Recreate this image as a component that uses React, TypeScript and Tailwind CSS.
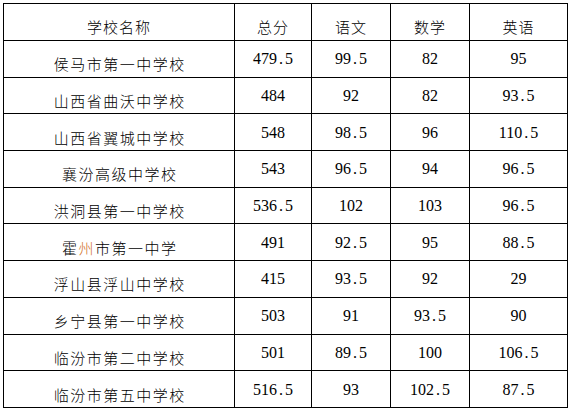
const HEADERS = ['学校名称', '总分', '语文', '数学', '英语'];

const ROWS: [string, string, string, string, string][] = [
  ['侯马市第一中学校', '479.5', '99.5', '82', '95'],
  ['山西省曲沃中学校', '484', '92', '82', '93.5'],
  ['山西省翼城中学校', '548', '98.5', '96', '110.5'],
  ['襄汾高级中学校', '543', '96.5', '94', '96.5'],
  ['洪洞县第一中学校', '536.5', '102', '103', '96.5'],
  ['霍州市第一中学', '491', '92.5', '95', '88.5'],
  ['浮山县浮山中学校', '415', '93.5', '92', '29'],
  ['乡宁县第一中学校', '503', '91', '93.5', '90'],
  ['临汾市第二中学校', '501', '89.5', '100', '106.5'],
  ['临汾市第五中学校', '516.5', '93', '102.5', '87.5'],
];

const CJK = "font-['Noto_Sans_CJK_SC',sans-serif]";
const NUM = "font-['Liberation_Serif','Times_New_Roman',serif]";

function Score({ value }: { value: string }) {
  const [whole, frac] = value.split('.');
  return (
    <span className={`${NUM} text-[16px]`}>
      {whole}
      {frac !== undefined ? (
        <>
          <span className="inline-block w-[8px] text-center">.</span>
          {frac}
        </>
      ) : null}
    </span>
  );
}

function SchoolName({ name }: { name: string }) {
  // 霍州 — the second character is tinted in the source document
  if (name.startsWith('霍州')) {
    return (
      <>
        霍<span className="text-[#d2722c]">州</span>
        {name.slice(2)}
      </>
    );
  }
  return <>{name}</>;
}

export default function App() {
  return (
    <div className="w-[570px] h-[411px] bg-white pl-[3px] pt-[3px]">
      <table className="border-collapse table-fixed w-[564px] text-black">
        <colgroup>
          <col className="w-[231px]" />
          <col className="w-[77px]" />
          <col className="w-[79px]" />
          <col className="w-[79px]" />
          <col className="w-[98px]" />
        </colgroup>
        <thead>
          <tr className="h-[37px]">
            {HEADERS.map((h) => (
              <th
                key={h}
                className={`${CJK} border border-black p-0 pt-[10px] text-center align-middle text-[15px] font-light tracking-[1px]`}
              >
                {h}
              </th>
            ))}
          </tr>
        </thead>
        <tbody>
          {ROWS.map((row) => (
            <tr key={row[0]} className="h-[36.7px]">
              <td className={`${CJK} border border-black p-0 pt-[10px] pl-[1.5px] text-center align-middle text-[15px] tracking-[1.5px] font-light leading-none`}>
                <SchoolName name={row[0]} />
              </td>
              {row.slice(1).map((v, i) => (
                <td key={i} className="border border-black p-0 text-center align-middle leading-none">
                  <Score value={v} />
                </td>
              ))}
            </tr>
          ))}
        </tbody>
      </table>
    </div>
  );
}
